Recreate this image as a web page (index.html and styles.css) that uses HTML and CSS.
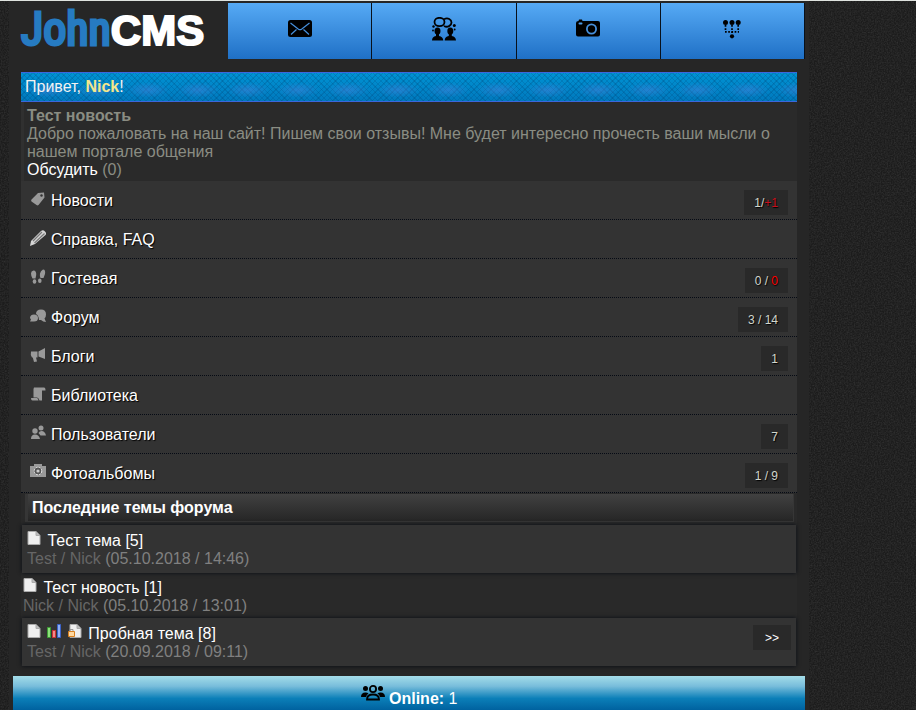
FILE: index.html
```html
<!DOCTYPE html>
<html lang="ru">
<head>
    <meta charset="UTF-8">
    <meta name="viewport" content="width=device-width, initial-scale=1.0">
    <title>JohnCMS</title>
    <link rel="stylesheet" href="styles.css">
</head>
<body>
    <svg class="noise" aria-hidden="true">
        <filter id="grain">
            <feTurbulence type="fractalNoise" baseFrequency="0.7" numOctaves="2" seed="4"/>
            <feColorMatrix values="0 0 0 0 1  0 0 0 0 1  0 0 0 0 1  0.16 0 0 0 -0.05"/>
        </filter>
        <rect width="100%" height="100%" filter="url(#grain)"/>
    </svg>
    <div class="page">
        <header class="header">
            <a class="logo" href="/"><span class="logo-john">John</span><span class="logo-cms">CMS</span></a>
            <nav class="top-nav">
                <a href="/mail" aria-label="Почта">
                    <svg viewBox="0 0 24 24"><rect x="0" y="3" width="24" height="17" rx="2.5"/><path d="M2.5 6l8 6.200q1.500 1 3 0l8-6.200M3 17.500l5.500-5M21 17.500l-5.500-5" fill="none" stroke="#4690dc" stroke-width="1.200"/></svg>
                </a>
                <a href="/guestbook" aria-label="Чат">
                    <svg viewBox="0 0 24 24"><g fill="none" stroke="#000" stroke-width="1.800"><ellipse cx="7.500" cy="5" rx="5" ry="4.200"/><path d="M12 2.200c4-2 7.500.3 7.500 3.300s-4 5.500-7.500 3.500"/></g><circle cx="22.300" cy="8.500" r="1.500"/><circle cx="1.500" cy="9.500" r="1.200"/><circle cx="22.700" cy="12.500" r=".9"/><circle cx="1" cy="13.500" r=".9"/><ellipse cx="5.500" cy="14" rx="3" ry="3.500"/><ellipse cx="18.300" cy="14" rx="3" ry="3.500"/><path d="M4 16h3v3q4 .5 4.300 4.500H0q0-4 4-4.500zM16.800 16h3v3q4 .5 4.200 4.500H12.700q0-4 4.100-4.500z"/></svg>
                </a>
                <a href="/album" aria-label="Фото">
                    <svg viewBox="0 0 24 24"><path d="M2.500 4L3 2.500h3L6.500 4H22q2 0 2 2v11.500q0 2-2 2H2q-2 0-2-2V6q0-2 2.500-2z"/><rect x="2.500" y="5.500" width="4" height="2" rx="1" fill="#4b9ae7"/><circle cx="15.500" cy="12" r="4.600" stroke="#4690dc" stroke-width="1.800"/></svg>
                </a>
                <a href="/menu" aria-label="Меню">
                    <svg viewBox="0 0 24 24"><circle cx="5.500" cy="5.500" r="2.500"/><circle cx="12" cy="5.500" r="2.500"/><circle cx="18.200" cy="5.500" r="2.500"/><path d="M5.500 8v6.500M12 8v8M18.200 8v6.500M5 14.800h14" fill="none" stroke="#000" stroke-width="1.700" stroke-dasharray="1.700 1.500"/><circle cx="12" cy="19.300" r="2.100"/></svg>
                </a>
            </nav>
        </header>
        <main class="content">
            <div class="greeting">Привет, <b>Nick</b>!</div>
            <div class="news">
                <h3>Тест новость</h3>
                <p>Добро пожаловать на наш сайт! Пишем свои отзывы! Мне будет интересно прочесть ваши мысли о нашем портале общения</p>
                <a href="/news">Обсудить</a> (0)
            </div>
            <ul class="menu">
                <li>
                    <svg viewBox="0 0 16 16"><path d="M1.500 8.500L8 2l6-.5.500 5L8.500 14q-1 .8-2 0L1.500 10.500q-.8-1 0-2z"/><circle cx="11.500" cy="4.500" r="1.200" fill="#333"/></svg>
                    <a href="/news">Новости</a>
                    <span class="count">1/<em>+1</em></span>
                </li>
                <li>
                    <svg viewBox="0 0 16 16"><path d="M0 16l1-5L11 1q2-1.500 4 .5t.5 3.500L5 14z" fill="#d5d5d5"/><path d="M3 11l9-9M4.500 13l10-9.500" fill="none" stroke="#777" stroke-width="1.200"/></svg>
                    <a href="/help">Справка, FAQ</a>
                </li>
                <li>
                    <svg viewBox="0 0 16 16"><path d="M3.500 1.500c2 0 3 2 2.700 4.500l-.7 3.500H2.500Q1 7 1 4.500T3.500 1.500zM13 .5c2 0 2.500 2 2 4.500L13.500 9h-3Q9.500 7 10 4.500T13 .5z"/><ellipse cx="4.500" cy="12.500" rx="1.800" ry="2.200"/><ellipse cx="9.800" cy="11.800" rx="1.800" ry="2.200"/></svg>
                    <a href="/guestbook">Гостевая</a>
                    <span class="count">0 / <em class="hot">0</em></span>
                </li>
                <li>
                    <svg viewBox="0 0 16 16"><path d="M6 6Q6 1.500 11 1.500t5 5q0 2.500-1.500 4L16 14q-3 0-5-2H9q-.5-5-3-6z"/><path d="M4 6.500q4 0 4 3.500t-4 3.500H0l1-2Q0 10.500 0 9.500q.5-3 4-3z"/></svg>
                    <a href="/forum">Форум</a>
                    <span class="count">3 / 14</span>
                </li>
                <li>
                    <svg viewBox="0 0 16 16"><path d="M1 4.500h6.500v6H6l1 4-3 .5-1.200-4.500H2L.8 8zM8.500 4.500L15 1v11l-6.500-2.500z"/></svg>
                    <a href="/blogs">Блоги</a>
                    <span class="count">1</span>
                </li>
                <li>
                    <svg viewBox="0 0 16 16"><path d="M4 1.500h10q1.500 0 1.500 3H12v10H9.500q-1-3-2.500-3H3.500V3z"/><path d="M1 12h6q1 0 1.500 2.500H2.500Q1 14.500 1 12z"/></svg>
                    <a href="/library">Библиотека</a>
                </li>
                <li>
                    <svg viewBox="0 0 16 16"><circle cx="5" cy="6" r="2.700"/><circle cx="11" cy="3" r="2.500"/><path d="M1 14q0-4.500 4-4.500t5 4.500zM8.500 8q1-2 3-2 3.500 0 4.500 4.500h-5.500Q9.500 9 8.500 8z"/></svg>
                    <a href="/users">Пользователи</a>
                    <span class="count">7</span>
                </li>
                <li>
                    <svg viewBox="0 0 16 16"><path d="M0 2h4V0h8v2h4v11H0z"/><circle cx="8" cy="7" r="3.800" fill="#555" stroke="#eee" stroke-dasharray="2 1"/><circle cx="8" cy="7" r="1.600" fill="#ccc"/></svg>
                    <a href="/album">Фотоальбомы</a>
                    <span class="count">1 / 9</span>
                </li>
            </ul>
            <h2 class="section-title">Последние темы форума</h2>
            <div class="topic card">
                <div class="topic-name">
                    <svg viewBox="0 0 14 16"><path d="M1 1.500h8l4 4v9H1z" fill="#efefef" stroke="#aaa"/><path d="M9 1.500v4h4" fill="#bbb" stroke="#aaa"/></svg>
                    <a href="/forum/1">Тест тема</a> <span>[5]</span>
                </div>
                <div class="topic-info">Test / Nick <span>(05.10.2018 / 14:46)</span></div>
            </div>
            <div class="topic">
                <div class="topic-name">
                    <svg viewBox="0 0 14 16"><path d="M1 1.500h8l4 4v9H1z" fill="#efefef" stroke="#aaa"/><path d="M9 1.500v4h4" fill="#bbb" stroke="#aaa"/></svg>
                    <a href="/forum/2">Тест новость</a> <span>[1]</span>
                </div>
                <div class="topic-info">Nick / Nick <span>(05.10.2018 / 13:01)</span></div>
            </div>
            <div class="topic card">
                <a class="last-page" href="/forum/3" aria-label="Последняя страница">&gt;&gt;</a>
                <div class="topic-name">
                    <svg viewBox="0 0 14 16"><path d="M1 1.500h8l4 4v9H1z" fill="#efefef" stroke="#aaa"/><path d="M9 1.500v4h4" fill="#bbb" stroke="#aaa"/></svg>
                    <svg viewBox="0 0 14 16"><path d="M.5 4.500h3v10h-3z" fill="#8be07a" stroke="#3d9b35"/><path d="M5.500 7.500h3v7h-3z" fill="#f08a8a" stroke="#c33"/><path d="M10.500 1.500h3v13h-3z" fill="#8fb0f5" stroke="#3b62c8"/></svg>
                    <svg viewBox="0 0 14 16"><path d="M2 1.500h7l4 4v9H2z" fill="#efefef" stroke="#aaa"/><path d="M9 1.500v4h4" fill="#bbb" stroke="#aaa"/><path d="M2 8V6.500h3V8" fill="none" stroke="#999"/><path d="M.5 8.500h6v5h-6z" fill="#ffd9a0" stroke="#d9801f"/></svg>
                    <a href="/forum/3">Пробная тема</a> <span>[8]</span>
                </div>
                <div class="topic-info">Test / Nick <span>(20.09.2018 / 09:11)</span></div>
            </div>
        </main>
        <footer class="footer">
            <svg viewBox="0 0 24 16"><circle cx="4.500" cy="3.500" r="2.500"/><circle cx="19.500" cy="3.500" r="2.500"/><path d="M0 12q0-4.500 4.500-4.500 2 0 3 1-2 1-2.500 3.500zM24 12q0-4.500-4.500-4.500-2 0-3 1 2 1 2.500 3.500z"/><circle cx="12" cy="4" r="3.100" fill="none" stroke="#000" stroke-width="1.800"/><path d="M6 14.500q0-5 6-5t6 5z" fill="none" stroke="#000" stroke-width="1.800"/></svg>
            <a href="/online"><b>Online:</b> 1</a>
        </footer>
    </div>
</body>
</html>
```

FILE: styles.css
```css
* {
    box-sizing: border-box;
}
body {
    margin: 0;
    padding: 0 9px;
    border-top: 1px solid #dfe3df;
    background-color: #1c1c1c;
    color: #8a8a85;
    font-family: "Liberation Sans", Arial, sans-serif;
    font-size: 16px;
    line-height: 18px;
}
a {
    color: #fff;
    text-decoration: none;
}
.noise {
    position: fixed;
    top: 1px;
    left: 0;
    width: 100%;
    height: 100%;
    z-index: -1;
}
.page {
    max-width: 800px;
    padding: 2px 4px 0;
    background-color: #262626;
}

/* header */
.header {
    display: flex;
    height: 56px;
    margin-bottom: 13px;
}
.logo {
    flex: 0 0 215px;
    display: flex;
    align-items: baseline;
    padding-left: 8px;
    line-height: 52px;
}
.logo-john {
    color: #267bc2;
    font-family: "Roboto Condensed", "Open Sans Condensed", "Liberation Sans", sans-serif;
    font-size: 46px;
    -webkit-text-stroke: 3px #267bc2;
}
.logo-cms {
    font-size: 42px;
    font-weight: bold;
    -webkit-text-stroke: 2px #fff;
}
.top-nav {
    flex: 1;
    display: flex;
    background: linear-gradient(#56aaf5, #1f70c6);
}
.top-nav a {
    flex: 1;
    padding-top: 14px;
    border-right: 1px solid #08111c;
    text-align: center;
}
.top-nav svg {
    width: 24px;
    height: 24px;
}

/* content */
.content {
    margin: 0 8px;
    background-color: #292929;
}
.greeting {
    height: 30px;
    padding: 5px 4px;
    border-top: 1px solid #3c66dc;
    border-bottom: 1px solid #3c66dc;
    background:
        radial-gradient(ellipse, rgba(70, 130, 220, 0.5), transparent 60%) 2px 8px / 50px 18px repeat-x,
        repeating-linear-gradient(45deg, rgba(0, 60, 110, 0.2) 0 1px, transparent 1px 4px),
        repeating-linear-gradient(-45deg, rgba(0, 60, 110, 0.2) 0 1px, transparent 1px 4px),
        linear-gradient(#0093d4, #0079bd);
    color: #f2f2f2;
}
.greeting b {
    color: #f3e78c;
}
.news {
    padding: 5px 3px 2px;
    border-left: 3px solid #303030;
    background-color: #2a2a2a;
    color: #8a8d83;
}
.news h3 {
    margin: 0;
    font-size: 16px;
}
.news p {
    margin: 0;
}
.menu {
    margin: 0 0 1px;
    padding: 0;
    list-style: none;
    background-color: #333;
}
.menu li {
    display: flex;
    height: 39px;
    padding: 0 9px;
    border-bottom: 1px dotted #050a14;
    text-shadow: 1px 1px 1px #000;
}
.menu svg {
    width: 16px;
    height: 16px;
    margin: 10px 5px 0 0;
    fill: #999;
}
.menu a {
    flex: 1;
    padding-top: 11px;
}
.count,
.last-page {
    height: 25px;
    padding: 0 10px;
    background-color: #292929;
    color: #d2d6cc;
    font-size: 12px;
    line-height: 26px;
}
.count {
    margin-top: 9px;
}
.count em {
    color: #c8101c;
    font-style: normal;
}
.count .hot {
    color: #f00;
}
.section-title {
    margin: 0 3px 3px 4px;
    padding: 5px 4px 4px;
    border: 1px solid #363636;
    border-width: 0 1px 1px 3px;
    background: linear-gradient(#414141, #262626);
    color: #fff;
    font-size: 16px;
}
.topic {
    padding: 6px 2px 3px;
}
.topic.card {
    margin: 0 1px;
    padding: 7px 5px 5px;
    background-color: #333;
    box-shadow: 0 0 4px #060a12;
}
.topic-name {
    color: #fff;
}
.topic-name svg {
    width: 14px;
    height: 16px;
    margin: -3px 2px 0 0;
    vertical-align: 0;
}
.topic-info {
    color: #666;
}
.topic-info span {
    color: #808080;
}
.last-page {
    float: right;
    padding: 0 12px;
    color: #fff;
}

/* footer */
.footer {
    margin-top: 10px;
    padding: 9px 0 2px;
    background: linear-gradient(#a4dde9, #78bddb 30%, #0b7fb8 66%, #00629f);
    text-align: center;
}
.footer svg {
    width: 24px;
    height: 16px;
    vertical-align: 3px;
}
```
